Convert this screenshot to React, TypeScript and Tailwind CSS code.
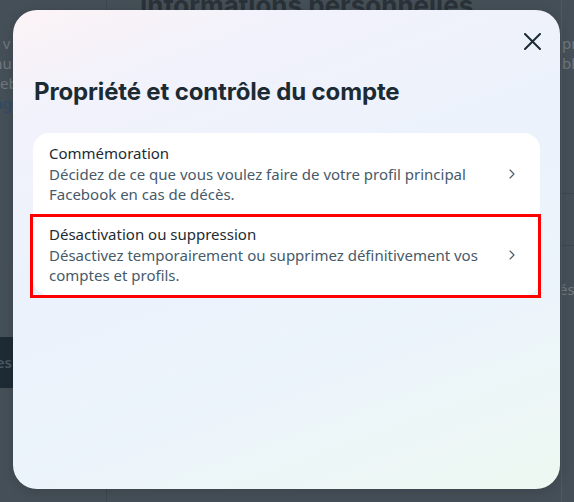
import { ChevronRight } from 'lucide-react';

type Row = {
  title: string;
  description: string;
  highlighted?: boolean;
};

const rows: Row[] = [
  {
    title: 'Commémoration',
    description: 'Décidez de ce que vous voulez faire de votre profil principal Facebook en cas de décès.',
  },
  {
    title: 'Désactivation ou suppression',
    description: 'Désactivez temporairement ou supprimez définitivement vos comptes et profils.',
    highlighted: true,
  },
];

function SettingsRow({ row }: { row: Row }) {
  return (
    <div className="relative flex items-center pl-4 pr-5 py-[10px] cursor-pointer">
      <div className="flex-1 pr-3">
        <div className="text-[15px] leading-[21px] text-[#1c2b33]">{row.title}</div>
        <div className="text-[15px] leading-[20px] text-[#465a69]">{row.description}</div>
      </div>
      <ChevronRight className="w-4 h-4 text-[#465a69]" strokeWidth={1.6} />
      {row.highlighted && (
        <div className="absolute -left-[3px] -right-[1px] top-0 -bottom-[3px] border-[3.5px] border-[#ff0000] pointer-events-none" />
      )}
    </div>
  );
}

export default function App() {
  return (
    <div
      className="relative w-[574px] h-[502px] overflow-hidden bg-[#454f57]"
      style={{ fontFamily: '"Noto Sans", "Open Sans", Arial, sans-serif' }}
    >
      {/* page behind the dimmed overlay */}
      <div className="flex h-full">
        <div className="w-[107px] border-r border-[#3d464d] flex flex-col">
          <div className="mt-[33px] ml-[-120px] text-[15px] leading-[20px] text-[#6f777d] whitespace-nowrap">
            <div className="ml-[-2px]">Gérez ce qui est t v</div>
            <div className="ml-[3px]">les comptes du numb</div>
            <div className="ml-[2px]">Instagram et Faceboo</div>
            <div className="text-[#2f4a66]">Voir plus de réglages oi</div>
          </div>
          <div className="mt-[224px] h-[51px] w-[120px] bg-[#1e2b35] flex items-center justify-end pr-[108px] text-[15px] font-semibold text-[#4a5762]">
            Paramètres
          </div>
        </div>
        <div className="flex-1 relative">
          <div className="mt-[-14px] ml-[33px] text-[26px] font-bold text-[#2a3238] whitespace-nowrap" style={{ fontFamily: 'Inter, sans-serif' }}>
            Informations personnelles
          </div>
        </div>
        <div className="w-[13px] border-l border-[#505960] flex flex-col overflow-hidden">
          <div className="mt-[33px] text-[15px] leading-[20px] text-[#6f777d] whitespace-nowrap">
            <div>pro</div>
            <div>ble</div>
          </div>
          <div className="mt-[120px] border-t border-[#3d464d]" />
          <div className="mt-[51px] border-t border-[#3d464d]" />
          <div className="mt-[33px] text-[15px] leading-[20px] text-[#6f777d] whitespace-nowrap ml-[-3px]">ésa</div>
        </div>
      </div>

      {/* modal */}
      <div className="absolute left-[13px] top-[10px] w-[547px] h-[479px] rounded-[24px] overflow-hidden shadow-[0_2px_12px_rgba(0,0,0,0.15)] bg-[linear-gradient(160deg,#fcf3f6_0%,#f2f2fb_16%,#ebf2fc_45%,#ecf4fb_70%,#edf8f1_100%)]">
        <div className="flex justify-end pt-[23px] pr-[19px]">
          <button className="w-[17px] h-[17px] text-[#1c2b33]">
            <svg viewBox="0 0 17 17" className="w-[17px] h-[17px]" fill="none" stroke="currentColor" strokeWidth="2" strokeLinecap="round">
              <path d="M1 1L16 16M16 1L1 16" />
            </svg>
          </button>
        </div>
        <h1
          className="mt-[27px] ml-[21px] text-[24px] leading-[30px] font-bold text-[#1c2b33] tracking-[-0.15px]"
          style={{ fontFamily: 'Inter, sans-serif' }}
        >
          Propriété et contrôle du compte
        </h1>
        <div className="mx-[20px] mt-[26px] bg-white rounded-[16px]">
          {rows.map((row) => (
            <SettingsRow key={row.title} row={row} />
          ))}
        </div>
      </div>
    </div>
  );
}
